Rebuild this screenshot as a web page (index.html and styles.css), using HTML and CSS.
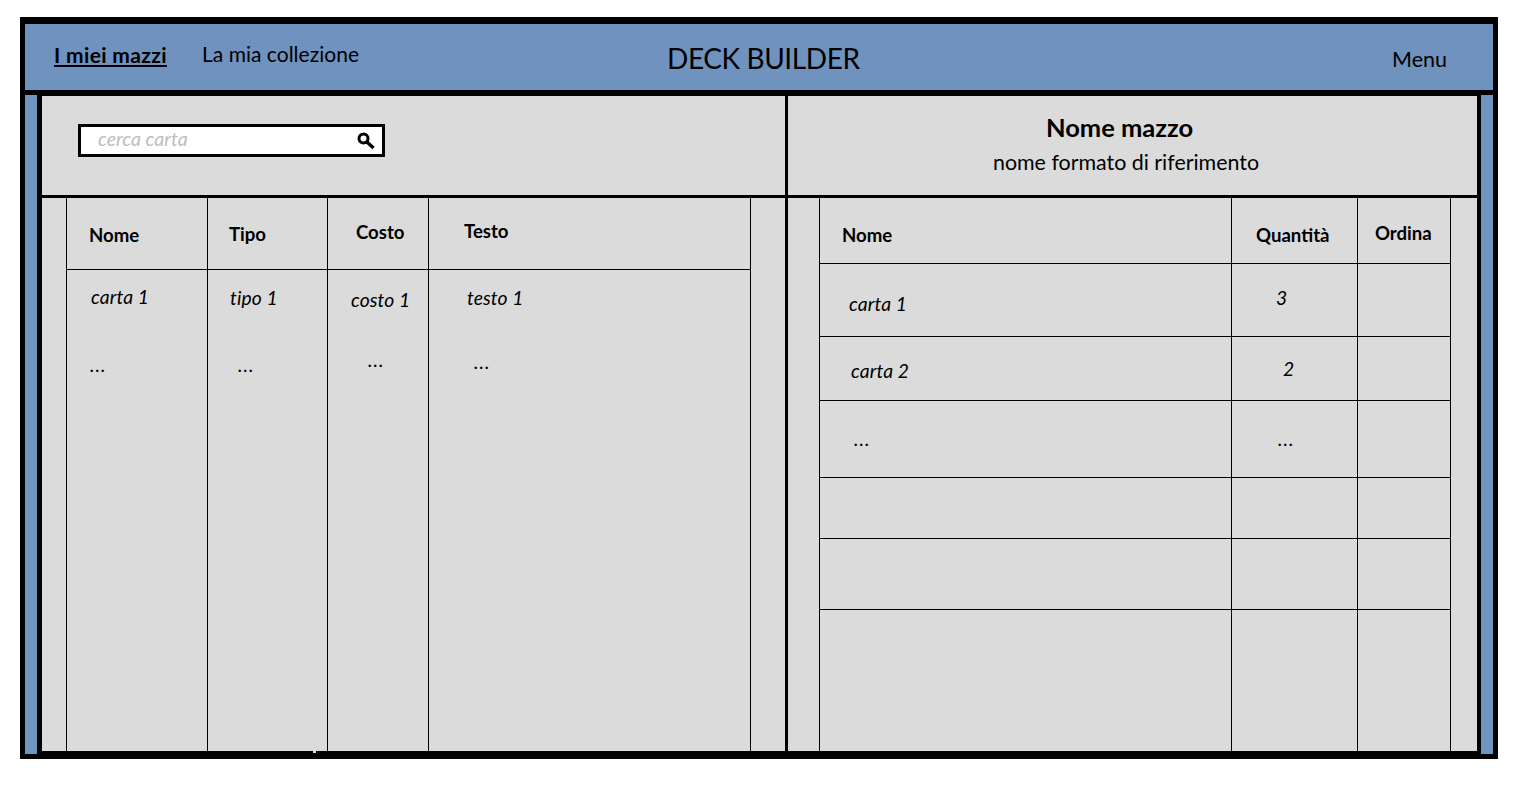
FILE: index.html
```html
<!DOCTYPE html>
<html lang="it">
<head>
<meta charset="utf-8">
<title>Deck Builder</title>
<link rel="stylesheet" href="styles.css">
</head>
<body>
<div class="frame">
  <header class="topbar">
    <nav class="nav">
      <a class="nav-active">I miei mazzi</a>
      <a class="nav-link">La mia collezione</a>
    </nav>
    <h1 class="brand">DECK BUILDER</h1>
    <a class="menu">Menu</a>
  </header>
  <div class="workspace">
    <div class="strip"></div>
    <main class="board">
      <section class="search-cell">
        <div class="search">
          <span class="search-text">cerca carta</span>
          <svg class="search-icon" viewBox="0 0 18 18" width="18" height="18" aria-hidden="true">
            <circle cx="6.5" cy="6.5" r="4.5" fill="none" stroke="#000" stroke-width="3"/>
            <path d="M10 10l6.5 6" fill="none" stroke="#000" stroke-width="3.4"/>
          </svg>
        </div>
      </section>
      <section class="deck-cell">
        <h2 class="deck-name">Nome mazzo</h2>
        <p class="deck-format">nome formato di riferimento</p>
      </section>
      <section class="cards">
        <div class="col col-name">
          <div class="col-head"><b class="th th-a">Nome</b></div>
          <i class="td td-n1">carta 1</i>
          <i class="td dots td-n2">...</i>
        </div>
        <div class="col col-type">
          <div class="col-head"><b class="th th-b">Tipo</b></div>
          <i class="td td-t1">tipo 1</i>
          <i class="td dots td-t2">...</i>
          <span class="speck"></span>
        </div>
        <div class="col col-cost">
          <div class="col-head"><b class="th th-c">Costo</b></div>
          <i class="td td-c1">costo 1</i>
          <i class="td dots td-c2">...</i>
        </div>
        <div class="col col-text">
          <div class="col-head"><b class="th th-d">Testo</b></div>
          <i class="td td-x1">testo 1</i>
          <i class="td dots td-x2">...</i>
        </div>
      </section>
      <section class="deck">
        <div class="row row-head">
          <div class="cell"><b class="th dh-a">Nome</b></div>
          <div class="cell"><b class="th dh-b">Quantità</b></div>
          <div class="cell"><b class="th dh-c">Ordina</b></div>
        </div>
        <div class="row row-1">
          <div class="cell"><i class="td r1-a">carta 1</i></div>
          <div class="cell"><i class="td r1-b">3</i></div>
          <div class="cell"></div>
        </div>
        <div class="row row-2">
          <div class="cell"><i class="td r2-a">carta 2</i></div>
          <div class="cell"><i class="td r2-b">2</i></div>
          <div class="cell"></div>
        </div>
        <div class="row row-3">
          <div class="cell"><i class="td dots r3-a">...</i></div>
          <div class="cell"><i class="td dots r3-b">...</i></div>
          <div class="cell"></div>
        </div>
        <div class="row row-4"><div class="cell"></div><div class="cell"></div><div class="cell"></div></div>
        <div class="row row-5"><div class="cell"></div><div class="cell"></div><div class="cell"></div></div>
        <div class="row row-6"><div class="cell"></div><div class="cell"></div><div class="cell"></div></div>
      </section>
    </main>
    <div class="strip"></div>
  </div>
</div>
</body>
</html>
```
FILE: styles.css
```css
* { box-sizing: border-box; }
html, body { margin: 0; padding: 0; background: #fff; }
body {
  font-family: "Lato", "Open Sans", "Liberation Sans", sans-serif;
  color: #000;
  height: 806px;
  overflow: hidden;
}
.frame {
  width: 1478px;
  height: 742px;
  margin: 17px 0 0 20px;
  padding: 7px 5px 0;
  background: #000;
  display: flex;
  flex-direction: column;
}

/* top bar */
.topbar {
  height: 66px;
  flex: none;
  background: #6f92bf;
  display: flex;
  align-items: flex-start;
}
.nav {
  flex: 0 0 642px;
  display: flex;
  padding: 18px 0 0 29px;
  font-size: 21px;
  line-height: 24px;
}
.nav-active { font-weight: 700; text-decoration: underline; margin-right: 35px; margin-top: 1px; letter-spacing: 0.35px; }
.nav-link { letter-spacing: 0.02px; }
.brand {
  margin: 17px 0 0;
  font-size: 28px;
  line-height: 34px;
  font-weight: 400;
  letter-spacing: -0.4px;
}
.menu {
  margin: 23px 46px 0 auto;
  font-size: 21.5px;
  line-height: 24px;
}

/* body */
.workspace {
  flex: 1;
  min-height: 0;
  margin-top: 6px;
  display: flex;
}
.strip {
  flex: 0 0 12px;
  margin: -1px 0 5px;
  background: #7094c2;
}
.board {
  width: 1435px;
  margin: 0 4px 8px 5px;
  background: #000;
  display: grid;
  grid-template-columns: 743px 689px;
  grid-template-rows: 99px 553px;
  gap: 3px;
}
.search-cell, .deck-cell, .cards, .deck { background: #dbdbdb; }

.search-cell { padding: 28px 0 0 36px; }
.search {
  width: 307px;
  height: 33px;
  border: 3px solid #000;
  background: #fff;
  display: flex;
  align-items: flex-start;
  padding-left: 17px;
}
.search-text {
  font-size: 19.5px;
  line-height: 24px;
  font-style: italic;
  color: #bdbdbd;
}
.search-icon { margin: 5px 7px 0 auto; }

.deck-cell { text-align: center; padding-top: 16px; }
.deck-name {
  margin: 0 0 0 -26px;
  font-size: 25.5px;
  line-height: 30px;
  font-weight: 700;
}
.deck-format {
  margin: 8px 0 0 -13px;
  font-size: 21.4px;
  line-height: 24px;
}

/* shared text */
.th, .td { display: block; line-height: 22px; }
.th { font-size: 18.6px; font-weight: 700; }
.td { font-size: 19.3px; font-style: italic; letter-spacing: 0.1px; }
.dots { letter-spacing: 1px; }

/* cards table: columns */
.cards { position: relative; display: flex; padding-left: 24px; }
.col { border-left: 1px solid #000; position: relative; }
.col-name { width: 141px; }
.col-type { width: 120px; }
.col-cost { width: 101px; }
.col-text { width: 323px; border-right: 1px solid #000; }
.col-head { height: 72px; border-bottom: 1px solid #000; }
.speck {
  position: absolute;
  left: 105px;
  bottom: -2px;
  width: 3px;
  height: 2px;
  background: #dbdbdb;
}
.th-a { padding: 26px 0 0 22px; }
.th-b { padding: 25px 0 0 21px; }
.th-c { padding: 23px 0 0 28px; }
.th-d { padding: 22px 0 0 35px; }
.td-n1 { padding: 16px 0 0 24px; }
.td-n2 { padding: 46px 0 0 23px; }
.td-t1 { padding: 17px 0 0 22px; }
.td-t2 { padding: 45px 0 0 30px; }
.td-c1 { padding: 19px 0 0 23px; }
.td-c2 { padding: 38px 0 0 40px; }
.td-x1 { padding: 17px 0 0 38px; }
.td-x2 { padding: 42px 0 0 45px; }

/* deck table: rows */
.deck { padding-left: 31px; display: flex; flex-direction: column; }
.row {
  width: 632px;
  display: grid;
  grid-template-columns: 412px 126px 94px;
  border-bottom: 1px solid #000;
}
.cell { border-left: 1px solid #000; }
.cell:last-child { border-right: 1px solid #000; }
.row-head { height: 66px; }
.row-1 { height: 73px; }
.row-2 { height: 64px; }
.row-3 { height: 77px; }
.row-4 { height: 61px; }
.row-5 { height: 71px; }
.row-6 { flex: 1; border-bottom: 0; }
.dh-a { padding: 26px 0 0 22px; }
.dh-b { padding: 26px 0 0 24px; }
.dh-c { padding: 24px 0 0 17px; }
.r1-a { padding: 29px 0 0 29px; }
.r1-b { padding: 23px 0 0 44px; }
.r2-a { padding: 23px 0 0 31px; }
.r2-b { padding: 21px 0 0 51px; }
.r3-a { padding: 27px 0 0 34px; }
.r3-b { padding: 27px 0 0 46px; }
```
